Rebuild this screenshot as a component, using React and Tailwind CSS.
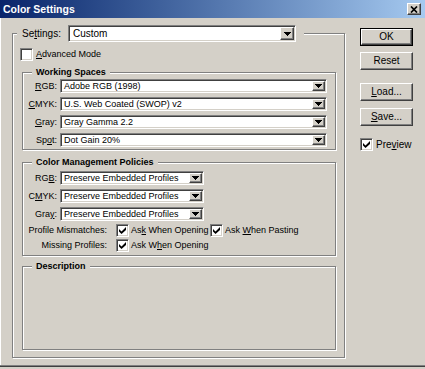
import React from 'react';

const RAISED = 'bg-[#d4d0c8] border border-t-white border-l-white border-r-[#404040] border-b-[#404040] shadow-[inset_-1px_-1px_0_#808080]';
const SUNKEN = 'bg-white border border-t-[#808080] border-l-[#808080] border-r-white border-b-white shadow-[inset_1px_1px_0_#404040,inset_-1px_-1px_0_#d4d0c8]';

const U = ({ children }) => <span className="underline underline-offset-[1px]">{children}</span>;

const Tri = () => (
    <svg width="7" height="4" viewBox="0 0 7 4">
        <path d="M0 0h7v1h-1v1h-1v1h-1v1h-1v-1h-1v-1h-1v-1h-1z" fill="#000" />
    </svg>
);

const Select = ({ value, className = '', textClass = 'text-[9px]', btnClass = 'w-[13px]' }) => (
    <div className={`flex items-stretch p-[1px] ${SUNKEN} ${className}`}>
        <span className={`flex flex-1 items-center truncate pl-[2px] leading-none ${textClass}`}>{value}</span>
        <span className={`flex items-center justify-center ${btnClass} ${RAISED}`}>
            <Tri />
        </span>
    </div>
);

const Check = ({ checked = false }) => (
    <span className={`flex h-[13px] w-[13px] shrink-0 items-center justify-center ${SUNKEN}`}>
        {checked && (
            <svg width="7" height="7" viewBox="0 0 7 7">
                <path d="M0 2L2.5 4.5L7 0V3L2.5 7L0 4.5Z" fill="#000" />
            </svg>
        )}
    </span>
);

const Group = ({ title, children, className = '' }) => (
    <fieldset className={`mx-[1px] border border-[#808080] shadow-[inset_1px_1px_0_#fff,1px_1px_0_#fff] ${className}`}>
        <legend className="ml-[9px] bg-[#d4d0c8] px-[4px] text-[9px] font-bold leading-[11px]">{title}</legend>
        {children}
    </fieldset>
);

const Row = ({ label, value, width }) => (
    <div className="flex h-[14px] items-center">
        <span className="mr-[3px] w-[34px] text-right text-[9px] leading-none">{label}</span>
        <Select value={value} className={`h-[14px] ${width}`} />
    </div>
);

const Btn = ({ children, isDefault = false, className = '' }) => (
    <div className={`h-[18px] w-[53px] ${isDefault ? 'border border-black' : ''} ${className}`}>
        <div className={`flex h-full w-full items-center justify-center text-[10px] leading-none ${RAISED}`}>
            {children}
        </div>
    </div>
);

export default function App() {
    return (
        <div className="flex h-[369px] w-[425px] flex-col overflow-hidden bg-[#d4d0c8] font-['Liberation_Sans',Arial,sans-serif] text-black">
            {/* title bar */}
            <div className="flex h-[18px] shrink-0 items-center justify-between bg-linear-to-r from-[#0a246a] to-[#a6caf0] pl-[3px] pr-[4px]">
                <span className="text-[10.5px] font-bold leading-none text-white">Color Settings</span>
                <span className={`flex h-[12px] w-[14px] items-center justify-center ${RAISED}`}>
                    <svg width="8" height="7" viewBox="0 0 8 7">
                        <path d="M1 0.5L7 6.5M7 0.5L1 6.5" stroke="#000" strokeWidth="1.7" />
                    </svg>
                </span>
            </div>

            {/* body */}
            <div className="flex h-[347px] shrink-0 pl-[12px] pt-[7px] shadow-[inset_1px_0_0_#fff]">
                <fieldset className="h-fit w-[333px] border border-[#808080] shadow-[inset_1px_1px_0_#fff,1px_1px_0_#fff]">
                    <legend className="ml-[4px] bg-[#d4d0c8] pl-[5px] pr-[8px]">
                        <div className="flex h-[17px] items-center">
                            <span className="mr-[4px] w-[42px] text-[10px] leading-none">
                                Se<U>t</U>tings:
                            </span>
                            <Select value="Custom" className="h-[17px] w-[228px]" textClass="text-[10px] pl-[3px]" btnClass="w-[14px]" />
                        </div>
                    </legend>

                    <div className="flex flex-col pb-[7px] pl-[8px] pr-[7px] pt-[6px]">
                        <div className="ml-[-1px] flex h-[13px] items-center">
                            <Check />
                            <span className="ml-[3px] text-[9px] leading-none">
                                <U>A</U>dvanced Mode
                            </span>
                        </div>

                        <Group title="Working Spaces" className="mt-[6px]">
                            <div className="flex flex-col gap-[4px] pb-[2px] pt-[1px]">
                                <Row label={<><U>R</U>GB:</>} value="Adobe RGB (1998)" width="w-[267px]" />
                                <Row label={<><U>C</U>MYK:</>} value="U.S. Web Coated (SWOP) v2" width="w-[267px]" />
                                <Row label={<><U>G</U>ray:</>} value="Gray Gamma 2.2" width="w-[267px]" />
                                <Row label={<>Sp<U>o</U>t:</>} value="Dot Gain 20%" width="w-[267px]" />
                            </div>
                        </Group>

                        <Group title="Color Management Policies" className="mt-[7px]">
                            <div className="flex flex-col pb-[3px] pt-[3px]">
                                <div className="flex flex-col gap-[4px]">
                                    <Row label={<>RG<U>B</U>:</>} value="Preserve Embedded Profiles" width="w-[144px]" />
                                    <Row label={<>C<U>M</U>YK:</>} value="Preserve Embedded Profiles" width="w-[144px]" />
                                    <Row label={<>Gra<U>y</U>:</>} value="Preserve Embedded Profiles" width="w-[144px]" />
                                </div>
                                <div className="mt-[3px] flex h-[13px] items-center text-[9px] leading-none">
                                    <span className="w-[84px] text-right">Profile Mismatches:</span>
                                    <div className="ml-[9px] flex w-[94px] items-center">
                                        <Check checked />
                                        <span className="ml-[2px]">
                                            As<U>k</U> When Opening
                                        </span>
                                    </div>
                                    <Check checked />
                                    <span className="ml-[2px]">
                                        Ask <U>W</U>hen Pasting
                                    </span>
                                </div>
                                <div className="mt-[2px] flex h-[13px] items-center text-[9px] leading-none">
                                    <span className="w-[84px] text-right">Missing Profiles:</span>
                                    <div className="ml-[9px] flex items-center">
                                        <Check checked />
                                        <span className="ml-[2px]">
                                            Ask W<U>h</U>en Opening
                                        </span>
                                    </div>
                                </div>
                            </div>
                        </Group>

                        <Group title="Description" className="mt-[5px]">
                            <div className="h-[77px]" />
                        </Group>
                    </div>
                </fieldset>

                {/* buttons */}
                <div className="ml-[15px] flex w-[60px] flex-col pt-[3px]">
                    <Btn isDefault>OK</Btn>
                    <Btn className="mt-[6px]">Reset</Btn>
                    <Btn className="mt-[13px]">
                        <U>L</U>oad...
                    </Btn>
                    <Btn className="mt-[7px]">
                        <U>S</U>ave...
                    </Btn>
                    <div className="mt-[12px] flex h-[13px] items-center">
                        <Check checked />
                        <span className="ml-[3px] text-[10px] leading-none">
                            Pre<U>v</U>iew
                        </span>
                    </div>
                </div>
            </div>

            <div className="h-[1px] shrink-0 bg-[#808080]" />
            <div className="h-[1px] shrink-0 bg-[#404040]" />
            <div className="flex-1" />
        </div>
    );
}
